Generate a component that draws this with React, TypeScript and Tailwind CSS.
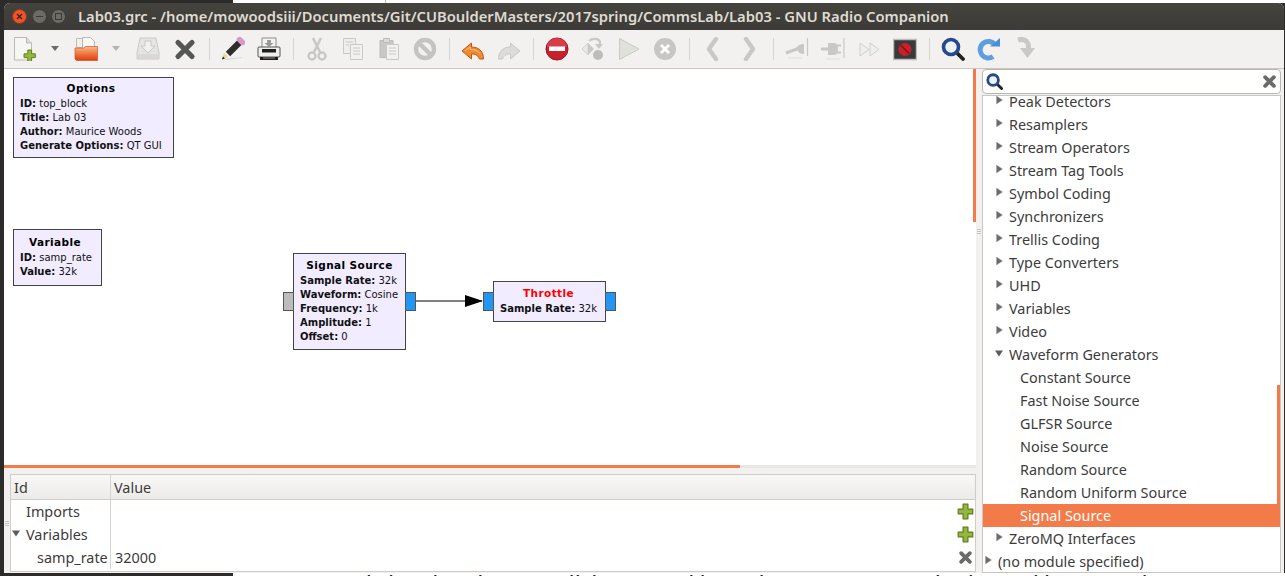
import React from "react";

const uiFont = "font-['Noto_Sans','DejaVu_Sans',sans-serif]";
const blockFont = "font-['DejaVu_Sans',sans-serif]";

const Svg = ({ children, size = 24 }: { children: React.ReactNode; size?: number }) => (
  <svg width={size} height={size} viewBox="0 0 24 24" fill="none">{children}</svg>
);

const D = "#c9c8c5";
const Plus = ({ x = 0, y = 0, s = 1 }: { x?: number; y?: number; s?: number }) => (
  <path transform={`translate(${x} ${y}) scale(${s})`} d="M4 0h4v4h4v4H8v4H4V8H0V4h4z" fill="#93b83c" stroke="#5f7d1f" strokeWidth="1" strokeLinejoin="round" />
);

const icons: Record<string, React.ReactNode> = {
  new: (
    <Svg>
      <path d="M1.5.5h12l5 5.5v17h-17z" fill="#f6f6f4" stroke="#b9b9b5" />
      <path d="M13.5.5v5.5h5" fill="#dcdcd8" stroke="#b9b9b5" />
      <Plus x={11} y={13} s={0.95} />
    </Svg>
  ),
  open: (
    <Svg>
      <defs>
        <linearGradient id="fold" x1="0" y1="0" x2="0" y2="1">
          <stop offset="0" stopColor="#f9b98a" />
          <stop offset="0.5" stopColor="#ee7a3e" />
          <stop offset="1" stopColor="#dc3d14" />
        </linearGradient>
      </defs>
      <path d="M2.5 1.500h6v9h-6z" fill="#f2f0ea" stroke="#c2bdb0" />
      <path d="M8.500.5h8l4 4v8h-12z" fill="#f7f7f5" stroke="#b9b9b5" />
      <path d="M1 11h9l1.500-1.500H23.500V23.500H2.500L1 22z" fill="url(#fold)" stroke="#c8461c" strokeWidth="0.6" />
    </Svg>
  ),
  save: (
    <Svg>
      <path d="M4 1h16l3 15v6H1v-6z" fill="#e4e4e1" stroke={D} />
      <path d="M2 17h20v4H2z" fill="#d8d8d5" />
      <path d="M9 4h6v5h4l-7 7-7-7h4z" fill="#f1f1ef" stroke={D} />
    </Svg>
  ),
  close: (
    <Svg>
      <path d="M5 5.5l14 14M19 5.5l-14 14" stroke="#555753" strokeWidth="5.2" strokeLinecap="round" />
    </Svg>
  ),
  pencil: (
    <Svg>
      <path d="M1 22.5l2-7 4 4z" fill="#e8dc9a" />
      <path d="M1 22.5l1-3 2 2z" fill="#222" />
      <path d="M7 17L19 5" stroke="#2e2e2e" strokeWidth="6.2" />
      <path d="M18.5 2.5l3 3" stroke="#d79ac2" strokeWidth="5.4" strokeLinecap="round" />
      <path d="M4 22.5c6-1 12-1 17-2" stroke="#dddcd9" strokeWidth="1.2" />
    </Svg>
  ),
  print: (
    <Svg>
      <path d="M5 1h14v12H5z" fill="#f3f3f1" stroke="#8b8b88" />
      <path d="M10 3h4v3h2.5L12 10 7.500 6H10z" fill="#9a9a97" />
      <path d="M2 10h20a1 1 0 011 1v8a1 1 0 01-1 1H2a1 1 0 01-1-1v-8a1 1 0 011-1z" fill="#eeeeec" stroke="#55554f" />
      <path d="M5 12h14v3.500H5z" fill="#1f1f1f" />
      <path d="M3 20h18v3H3z" fill="#1d1d1d" />
      <path d="M6 20.500h12v1H6z" fill="#888" />
    </Svg>
  ),
  cut: (
    <Svg>
      <path d="M8 1l7 14M16 1L9 15" stroke={D} strokeWidth="2.6" />
      <circle cx="7" cy="19" r="3.500" stroke={D} strokeWidth="2.4" />
      <circle cx="17" cy="19" r="3.500" stroke={D} strokeWidth="2.4" />
    </Svg>
  ),
  copy: (
    <Svg>
      <path d="M2.500 1.500h12v15h-12z" fill="#efeeec" stroke={D} />
      <path d="M9.500 7.500h12v15h-12z" fill="#f2f1ef" stroke={D} />
      <path d="M5 5h7M5 8h3M12 11h7M12 14h7M12 17h7" stroke={D} />
    </Svg>
  ),
  paste: (
    <Svg>
      <path d="M3 3.500h13v17H3z" fill={D} stroke="#bdbcb9" />
      <path d="M6.500 1.500h6v4h-6z" fill="#dddcd9" stroke="#bdbcb9" />
      <path d="M9.500 7.500h12v15h-12z" fill="#f2f1ef" stroke={D} />
      <path d="M12 11h7M12 14h7M12 17h7" stroke={D} />
    </Svg>
  ),
  no: (
    <Svg>
      <circle cx="12" cy="12" r="9" stroke="#c4c3c0" strokeWidth="4.400" />
      <path d="M6 6l12 12" stroke="#c4c3c0" strokeWidth="4.400" />
    </Svg>
  ),
  undo: (
    <Svg>
      <path d="M10.500 6L1 14l9.500 8v-5c4 0 6 1 8 5h4c0-8-5-12-12-12z" fill="#f08a2c" stroke="#c4541a" strokeLinejoin="round" />
      <path d="M4 14l5-4v2.500c4 0 8 1 10 4" stroke="#f9c37f" />
    </Svg>
  ),
  redo: (
    <Svg>
      <path d="M13.500 6L23 14l-9.500 8v-5c-4 0-6 1-8 5h-4c0-8 5-12 12-12z" fill="#dcdbd8" stroke={D} strokeLinejoin="round" />
    </Svg>
  ),
  stop: (
    <Svg>
      <circle cx="12" cy="12" r="11" fill="#c9202c" stroke="#9c1520" />
      <path d="M2 10a10 9 0 0120 0z" fill="#e8525b" opacity="0.6" />
      <path d="M4 9.500h16v4.500H4z" fill="#fff" />
    </Svg>
  ),
  rotate: (
    <Svg>
      <path d="M7 6l6 6-6 6-6-6z" fill={D} />
      <path d="M7 6v12L1 12z" fill="#e8e8e6" stroke={D} strokeWidth="0.6" />
      <circle cx="17" cy="18" r="5" fill="#bdbcb9" />
      <path d="M8 4c3-3 10-3 11 1 .5 2-.5 3-1.500 4" stroke={D} strokeWidth="2.200" />
      <path d="M14 7l4 5 4-5z" fill={D} />
    </Svg>
  ),
  play: (
    <Svg>
      <path d="M2.500 1.500L22 12 2.500 22.500z" fill="#dfe2db" stroke="#c8cbc4" />
    </Svg>
  ),
  xc: (
    <Svg>
      <circle cx="12" cy="12" r="11" fill="#c8c6c4" />
      <path d="M8 8l8 8M16 8l-8 8" stroke="#fff" strokeWidth="2.800" />
    </Svg>
  ),
  prev: (
    <Svg>
      <path d="M15 2L8 12l7 10" stroke={D} strokeWidth="4.400" strokeLinejoin="round" strokeLinecap="round" />
    </Svg>
  ),
  next: (
    <Svg>
      <path d="M9 2l7 10-7 10" stroke={D} strokeWidth="4.400" strokeLinejoin="round" strokeLinecap="round" />
    </Svg>
  ),
  plug1: (
    <Svg>
      <path d="M1 16l11-4" stroke={D} strokeWidth="3" />
      <path d="M11 11c3-4 6-4 8-4v10c-3 0-6-1-8-6z" fill={D} />
      <path d="M22.500 1v18" stroke={D} strokeWidth="1.200" />
      <path d="M3 21h14" stroke="#e8e7e5" strokeWidth="2" />
    </Svg>
  ),
  plug2: (
    <Svg>
      <path d="M0 12h7" stroke={D} strokeWidth="3" />
      <path d="M7 6h6c3 0 4 3 4 6s-1 6-4 6H7z" fill={D} />
      <path d="M16 8.500h4M16 15.500h4" stroke={D} strokeWidth="2" />
      <path d="M23 1v20" stroke={D} strokeWidth="1.200" />
      <path d="M5 22h14" stroke="#e8e7e5" strokeWidth="2" />
    </Svg>
  ),
  ff: (
    <Svg>
      <path d="M3 6l9 6.500L3 19zM13 6l9 6.500-9 6.500z" fill="#eeeeec" stroke="#cfcfcb" />
    </Svg>
  ),
  red: (
    <Svg>
      <path d="M.500 2.500h23v20H.500z" fill="#3a3a3a" stroke="#bdbdba" strokeWidth="1.500" />
      <circle cx="12" cy="12.500" r="6.500" fill="#c9202c" />
      <path d="M8 8.500l8 8" stroke="#7f1018" strokeWidth="1.500" />
    </Svg>
  ),
  find: (
    <Svg>
      <path d="M15.500 15.500L22 22" stroke="#222" strokeWidth="3.800" strokeLinecap="round" />
      <circle cx="10" cy="10" r="7.500" fill="#eef3fa" stroke="#25488f" strokeWidth="3.600" />
    </Svg>
  ),
  refresh: (
    <Svg>
      <path d="M18 7.500A8 8 0 105 18a8 8 0 0011 1.500" stroke="#5d9de0" strokeWidth="5" />
      <path d="M13 9.500h10V1z" fill="#4a8fd8" />
    </Svg>
  ),
  down: (
    <Svg>
      <path d="M5 3c7-2 12 2 10 10" stroke={D} strokeWidth="5" />
      <path d="M7 11h15l-7.500 10z" fill={D} />
    </Svg>
  ),
};

const Btn = ({ n }: { n: string }) => <div className="w-[36px] h-[38px] flex items-center justify-center shrink-0">{icons[n]}</div>;
const Drop = ({ dim }: { dim?: boolean }) => (
  <div className="w-[25px] h-[38px] flex items-center justify-center shrink-0">
    <svg width="9" height="6" viewBox="0 0 9 6"><path d="M0 0h8L4 5z" fill={dim ? "#b5b4b1" : "#6b6b68"} /></svg>
  </div>
);
const Sep = () => (
  <div className="w-[12px] h-[38px] flex items-center justify-center shrink-0"><div className="w-px h-[22px] bg-[#d6d5d3]" /></div>
);

const Arrow = ({ down }: { down?: boolean }) => (
  <svg width="9" height="9" viewBox="0 0 9 9" className="shrink-0">
    {down ? <path d="M0 1.500h8L4 7.500z" fill="#5c5c5a" /> : <path d="M1.500 0v8l6-4z" fill="#6a6a68" stroke="#a5a5a2" strokeWidth="0.500" />}
  </svg>
);

type R = { t: string; lvl: 0 | 1 | 2; arrow?: "r" | "d"; sel?: boolean };
const rows: R[] = [
  { t: "Peak Detectors", lvl: 1, arrow: "r" },
  { t: "Resamplers", lvl: 1, arrow: "r" },
  { t: "Stream Operators", lvl: 1, arrow: "r" },
  { t: "Stream Tag Tools", lvl: 1, arrow: "r" },
  { t: "Symbol Coding", lvl: 1, arrow: "r" },
  { t: "Synchronizers", lvl: 1, arrow: "r" },
  { t: "Trellis Coding", lvl: 1, arrow: "r" },
  { t: "Type Converters", lvl: 1, arrow: "r" },
  { t: "UHD", lvl: 1, arrow: "r" },
  { t: "Variables", lvl: 1, arrow: "r" },
  { t: "Video", lvl: 1, arrow: "r" },
  { t: "Waveform Generators", lvl: 1, arrow: "d" },
  { t: "Constant Source", lvl: 2 },
  { t: "Fast Noise Source", lvl: 2 },
  { t: "GLFSR Source", lvl: 2 },
  { t: "Noise Source", lvl: 2 },
  { t: "Random Source", lvl: 2 },
  { t: "Random Uniform Source", lvl: 2 },
  { t: "Signal Source", lvl: 2, sel: true },
  { t: "ZeroMQ Interfaces", lvl: 1, arrow: "r" },
  { t: "(no module specified)", lvl: 0, arrow: "r" },
];

const Line = ({ k, v }: { k: string; v: string }) => (
  <div className="h-[14px] leading-[14px] whitespace-nowrap"><b className="font-bold">{k}:</b> {v}</div>
);

const Block = ({ cls, title, red, lines, titleCls }: { cls: string; title: string; red?: boolean; lines: [string, string][]; titleCls: string }) => (
  <div className={`absolute ${cls} border border-[#444] bg-[#f1ecff] pl-[6px] text-[10px] text-[#111] ${blockFont}`}>
    <div className={`h-[16px] leading-[15px] text-center text-[10.500px] font-bold tracking-[0.4px] ${titleCls} ${red ? "text-[#ff0000]" : "text-black"}`}>{title}</div>
    {lines.map(([k, v]) => <Line key={k} k={k} v={v} />)}
  </div>
);

const Port = ({ cls, gray }: { cls: string; gray?: boolean }) => (
  <div className={`absolute ${cls} w-[11px] h-[19px] border border-[#555] ${gray ? "bg-[#bcbcbc]" : "bg-[#2196f3]"}`} />
);

const Cell = ({ children }: { children: React.ReactNode }) => <div className="h-[23px] leading-[23px] whitespace-nowrap">{children}</div>;

export default function App() {
  return (
    <div className={`w-[1285px] h-[576px] overflow-hidden flex flex-col bg-[#2c2b29] ${uiFont}`}>
      <div className="h-[3px] flex shrink-0">
        <div className="w-[233px] bg-[#2c2b29]" />
        <div className="flex-1 bg-white flex">
          <div className="w-[152px]" />
          <div className="w-px bg-[#bbb]" />
        </div>
      </div>
      <div className="flex-1 min-h-0 flex pl-[4px] pr-px">
        <div className="flex-1 min-w-0 flex flex-col bg-[#f2f1f0] rounded-t-[6px] overflow-hidden">
          {/* title bar */}
          <div className="h-[27px] shrink-0 bg-gradient-to-b from-[#45433e] to-[#3c3b37] flex items-center pl-[8px]">
            <div className="w-[15px] h-[15px] rounded-full bg-[#e9562c] border border-[#8f3517] flex items-center justify-center">
              <svg width="7" height="7" viewBox="0 0 7 7"><path d="M1 1l5 5M6 1l-5 5" stroke="#4a1a0a" strokeWidth="1.300" /></svg>
            </div>
            <div className="ml-[5px] w-[15px] h-[15px] rounded-full bg-[#6d6b64] border border-[#3a3935] flex items-center justify-center">
              <div className="w-[7px] h-[1.500px] bg-[#3a3935]" />
            </div>
            <div className="ml-[4px] w-[15px] h-[15px] rounded-full bg-[#6d6b64] border border-[#3a3935] flex items-center justify-center">
              <div className="w-[7px] h-[7px] border border-[#3a3935]" />
            </div>
            <div className="ml-[12px] text-[14.770px] font-semibold text-[#dfdbd2] whitespace-nowrap leading-[27px]">
              Lab03.grc - /home/mowoodsiii/Documents/Git/CUBoulderMasters/2017spring/CommsLab/Lab03 - GNU Radio Companion
            </div>
          </div>
          {/* toolbar */}
          <div className="h-[39px] shrink-0 flex pl-[3px] border-b border-[#c9c7c3]">
            <Btn n="new" /><Drop /><Btn n="open" /><Drop dim /><div className="w-px" /><Btn n="save" /><div className="w-px" /><Btn n="close" />
            <Sep /><Btn n="pencil" /><Btn n="print" />
            <Sep /><Btn n="cut" /><Btn n="copy" /><Btn n="paste" /><Btn n="no" />
            <Sep /><Btn n="undo" /><Btn n="redo" />
            <Sep /><Btn n="stop" /><Btn n="rotate" /><Btn n="play" /><Btn n="xc" />
            <Sep /><Btn n="prev" /><Btn n="next" />
            <Sep /><Btn n="plug1" /><Btn n="plug2" /><Btn n="ff" /><Btn n="red" />
            <Sep /><Btn n="find" /><Btn n="refresh" /><Btn n="down" />
          </div>
          {/* content */}
          <div className="flex-1 min-h-0 flex">
            <div className="w-[972px] flex flex-col shrink-0">
              {/* canvas */}
              <div className="relative h-[396px] bg-white shrink-0 overflow-hidden">
                <div className="absolute right-0 top-0 w-[3px] h-[153px] bg-[#f37b4a]" />
                <Block cls="left-[9px] top-[8px] w-[161px] h-[81px] pt-[3px]" titleCls="pr-[11px]" title="Options" lines={[["ID", "top_block"], ["Title", "Lab 03"], ["Author", "Maurice Woods"], ["Generate Options", "QT GUI"]]} />
                <Block cls="left-[9px] top-[160px] w-[89px] h-[57px] pt-[5px]" titleCls="pr-[11px]" title="Variable" lines={[["ID", "samp_rate"], ["Value", "32k"]]} />
                <Block cls="left-[289px] top-[184px] w-[113px] h-[97px] pt-[4px]" titleCls="pr-[6px]" title="Signal Source" lines={[["Sample Rate", "32k"], ["Waveform", "Cosine"], ["Frequency", "1k"], ["Amplitude", "1"], ["Offset", "0"]]} />
                <Block cls="left-[489px] top-[212px] w-[113px] h-[41px] pt-[4px]" titleCls="pr-[8px]" title="Throttle" red lines={[["Sample Rate", "32k"]]} />
                <Port cls="left-[279px] top-[223px]" gray />
                <Port cls="left-[401px] top-[223px]" />
                <Port cls="left-[479px] top-[223px]" />
                <Port cls="left-[601px] top-[223px]" />
                <svg className="absolute left-[412px] top-[224px]" width="68" height="16" viewBox="0 0 68 16">
                  <path d="M0 8h66" stroke="#000" strokeWidth="1" />
                  <path d="M49 2L67 8 49 14z" fill="#000" />
                </svg>
              </div>
              <div className="h-[3px] shrink-0 bg-[#e8e7e5]"><div className="w-[736px] h-[3px] bg-[#f37b4a]" /></div>
              {/* variables panel */}
              <div className="flex-1 min-h-0 flex">
                <div className="w-[6px] shrink-0 flex flex-col justify-center items-center gap-px pt-[6px]">
                  <div className="w-[4px] h-px bg-[#c5c4c1]" /><div className="w-[4px] h-px bg-[#c5c4c1]" /><div className="w-[4px] h-px bg-[#c5c4c1]" />
                </div>
                <div className="flex-1 min-w-0 mt-[6px] border border-[#cfcdc9] bg-white flex flex-col text-[14.400px] text-[#3c3c3c] mb-px">
                  <div className="h-[25px] shrink-0 flex bg-gradient-to-b from-[#f8f8f7] to-[#ecebe9] border-b border-[#cfcdc9] leading-[25px]">
                    <div className="w-[100px] pl-[3px] border-r border-[#d6d4d0]">Id</div>
                    <div className="pl-[3px]">Value</div>
                  </div>
                  <div className="flex">
                    <div className="w-[100px] h-[69px] border-r border-[#d6d4d0] overflow-hidden">
                      <Cell><span className="pl-[15px]">Imports</span></Cell>
                      <Cell><div className="flex items-center"><span className="pl-[1px] w-[15px] flex items-center -mt-[3px]"><Arrow down /></span>Variables</div></Cell>
                      <Cell><span className="pl-[26px]">samp_rate</span></Cell>
                    </div>
                    <div className="flex-1 pl-[4px]">
                      <Cell>{""}</Cell><Cell>{""}</Cell><Cell>32000</Cell>
                    </div>
                    <div className="w-[20px] flex flex-col items-center text-[0px]">
                      <div className="h-[23px] flex items-center"><svg width="17" height="17" viewBox="-1 -1 14 14"><Plus /></svg></div>
                      <div className="h-[23px] flex items-center"><svg width="17" height="17" viewBox="-1 -1 14 14"><Plus /></svg></div>
                      <div className="h-[23px] flex items-center"><svg width="15" height="15" viewBox="0 0 24 24"><path d="M5 5l14 14M19 5L5 19" stroke="#6b6b68" strokeWidth="6" strokeLinecap="round" /></svg></div>
                    </div>
                  </div>
                </div>
              </div>
            </div>
            {/* gutter */}
            <div className="w-[6px] shrink-0 flex flex-col justify-center items-center gap-px pb-[180px]">
              <div className="w-[4px] h-px bg-[#c5c4c1]" /><div className="w-[4px] h-px bg-[#c5c4c1]" /><div className="w-[4px] h-px bg-[#c5c4c1]" />
            </div>
            {/* sidebar */}
            <div className="flex-1 min-w-0 flex flex-col pr-[3px]">
              <div className="h-[25px] shrink-0 mr-0 rounded-[4px] border border-[#b9b7b3] bg-white flex items-center justify-between pl-[3px] pr-[3px]">
                <Svg size={17}>
                  <path d="M15.500 15.500L22 22" stroke="#222" strokeWidth="4" strokeLinecap="round" />
                  <circle cx="10" cy="10" r="7.500" fill="#eef3fa" stroke="#25488f" strokeWidth="4" />
                </Svg>
                <svg width="15" height="15" viewBox="0 0 24 24"><path d="M5 5l14 14M19 5L5 19" stroke="#6b6b68" strokeWidth="6" strokeLinecap="round" /></svg>
              </div>
              <div className="mt-[1px] flex-1 min-h-0 border border-[#c9c7c3] bg-white overflow-hidden relative text-[14.400px] text-[#3c3c3c]">
                <div className="-mt-[6px]">
                  {rows.map((r) => (
                    <div key={r.t} className={`h-[23px] leading-[23px] flex items-center whitespace-nowrap ${r.sel ? "bg-[#f37b4a] text-white" : ""} ${r.lvl === 0 ? "pl-[15px]" : r.lvl === 1 ? "pl-[26px]" : "pl-[37px]"}`}>
                      {r.arrow && <span className={`-ml-[14px] w-[14px] flex -mt-[3px]`}><Arrow down={r.arrow === "d"} /></span>}
                      {r.t}
                    </div>
                  ))}
                </div>
                <div className="absolute right-0 top-[289px] w-[3px] h-[121px] bg-[#f37b4a]" />
              </div>
            </div>
          </div>
        </div>
      </div>
      <div className="h-[3px] flex shrink-0">
        <div className="w-[233px] bg-[#2c2b29]" />
        <div className="flex-1 bg-white overflow-hidden pl-[120px] font-['Liberation_Sans',sans-serif] font-bold text-[15px] leading-[15px] text-[#222] whitespace-nowrap tracking-[2px]">
          window that shows up click on "Graphic" under "Input Type" and select "Widgets" as shown
        </div>
      </div>
    </div>
  );
}
